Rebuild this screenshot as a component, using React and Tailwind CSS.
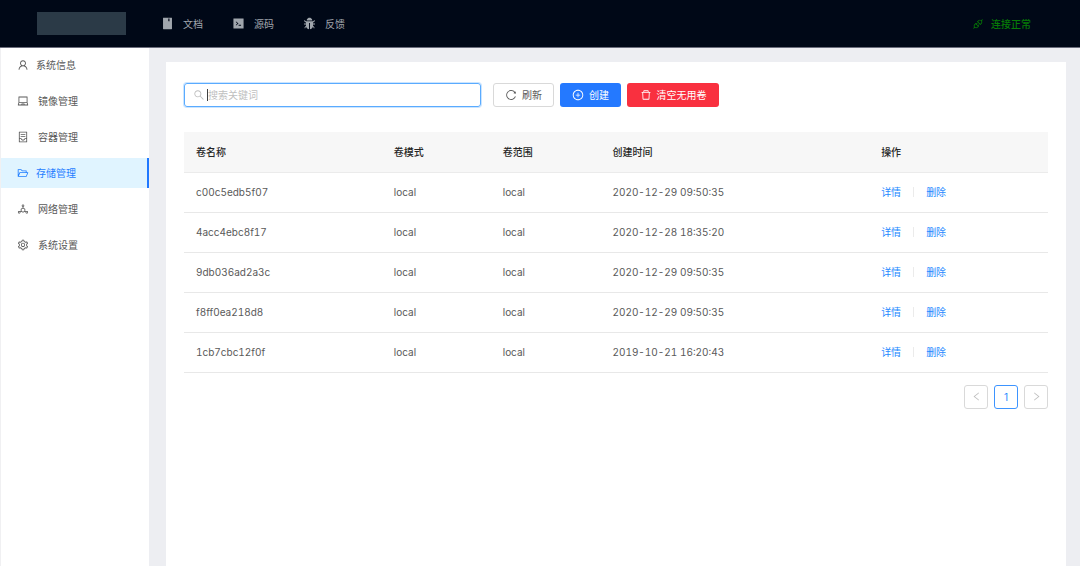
import { useState } from 'react';
import {
  AiFillBook,
  AiFillBug,
  AiFillCode,
  AiOutlineApi,
  AiOutlineContainer,
  AiOutlineDelete,
  AiOutlineDeploymentUnit,
  AiOutlineFolderOpen,
  AiOutlineLaptop,
  AiOutlineLeft,
  AiOutlinePlusCircle,
  AiOutlineReload,
  AiOutlineRight,
  AiOutlineSearch,
  AiOutlineSetting,
  AiOutlineUser,
} from 'react-icons/ai';

const links = [
  { label: '文档', icon: AiFillBook },
  { label: '源码', icon: AiFillCode },
  { label: '反馈', icon: AiFillBug },
];

const menu = [
  { key: 'info', label: '系统信息', icon: AiOutlineUser, tight: true },
  { key: 'image', label: '镜像管理', icon: AiOutlineLaptop },
  { key: 'container', label: '容器管理', icon: AiOutlineContainer },
  { key: 'volume', label: '存储管理', icon: AiOutlineFolderOpen, tight: true },
  { key: 'network', label: '网络管理', icon: AiOutlineDeploymentUnit },
  { key: 'setting', label: '系统设置', icon: AiOutlineSetting },
];

const volumes = [
  { name: 'c00c5edb5f07', driver: 'local', scope: 'local', created: '2020-12-29 09:50:35' },
  { name: '4acc4ebc8f17', driver: 'local', scope: 'local', created: '2020-12-28 18:35:20' },
  { name: '9db036ad2a3c', driver: 'local', scope: 'local', created: '2020-12-29 09:50:35' },
  { name: 'f8ff0ea218d8', driver: 'local', scope: 'local', created: '2020-12-29 09:50:35' },
  { name: '1cb7cbc12f0f', driver: 'local', scope: 'local', created: '2019-10-21 16:20:43' },
];

function Header() {
  return (
    <header className="flex h-12 items-center border-b border-[#6b6d7c] bg-[#000817] pr-[49px] pl-[37px]">
      <div className="h-[23px] w-[89px] bg-[#2b3a47]" />
      <nav className="ml-[35px] flex gap-[29px] text-[#a0a6ad]">
        {links.map(({ label, icon: Icon }) => (
          <a key={label} href="#" className="flex items-center gap-[9px]">
            <Icon className="h-[13px] w-[13px]" />
            {label}
          </a>
        ))}
      </nav>
      <div className="ml-auto flex items-center gap-[7px] font-medium text-[#067a06]">
        <AiOutlineApi className="h-3 w-3" />
        连接正常
      </div>
    </header>
  );
}

function Sidebar({ active, onSelect }) {
  return (
    <aside className="w-[149px] shrink-0 border-l border-[#f0f0f2] bg-white pt-[2px]">
      <nav className="flex flex-col gap-[6px]">
        {menu.map(({ key, label, icon: Icon, tight }) => (
          <a
            key={key}
            href="#"
            onClick={() => onSelect(key)}
            className={`flex h-[30px] items-center pl-4 ${tight ? 'gap-[7px]' : 'gap-[9px]'} ${
              active === key
                ? 'border-r-2 border-[#1f78ff] bg-[#e0f4ff] text-[#1f7dff]'
                : 'text-[#595959]'
            }`}
          >
            <Icon className="h-3 w-3" />
            {label}
          </a>
        ))}
      </nav>
    </aside>
  );
}

function Toolbar({ keyword, onChange }) {
  return (
    <div className="flex items-center">
      <label
        htmlFor="keyword"
        className="flex h-6 w-[297px] items-center rounded-[3px] border border-[#5aabff] px-2 shadow-[0_0_0_1px_#cbe5ff]"
      >
        <AiOutlineSearch className="h-3 w-3 text-[#bfbfbf]" />
        <span className="ml-[2px] h-3 w-px bg-[#404040]" />
        <input
          id="keyword"
          type="text"
          aria-label="搜索关键词"
          placeholder="搜索关键词"
          value={keyword}
          onChange={(e) => onChange(e.target.value)}
          className="h-full min-w-0 flex-1 outline-none placeholder:text-[#bfbfbf]"
        />
      </label>
      <div className="ml-3 flex gap-[6px]">
        <button className="flex h-6 w-[61px] items-center justify-center gap-[5px] rounded-[3px] border border-[#d9d9d9] bg-white text-[#595959]">
          <AiOutlineReload className="h-3 w-3" />
          刷新
        </button>
        <button className="flex h-6 w-[61px] items-center justify-center gap-[5px] rounded-[3px] bg-[#2479ff] text-white">
          <AiOutlinePlusCircle className="h-3 w-3" />
          创建
        </button>
        <button className="flex h-6 w-[92px] items-center justify-center gap-[5px] rounded-[3px] bg-[#f9303f] text-white">
          <AiOutlineDelete className="h-3 w-3" />
          清空无用卷
        </button>
      </div>
    </div>
  );
}

function VolumeTable({ rows }) {
  return (
    <table className="mt-[25px] w-full table-fixed text-left text-[#595959]">
      <colgroup>
        <col className="w-[22.9%]" />
        <col className="w-[12.6%]" />
        <col className="w-[12.7%]" />
        <col className="w-[31.1%]" />
        <col />
      </colgroup>
      <thead className="bg-[#f7f7f7] text-[#262626]">
        <tr className="h-10 border-b border-[#ebebeb]">
          <th className="px-3 font-medium">卷名称</th>
          <th className="px-3 font-medium">卷模式</th>
          <th className="px-3 font-medium">卷范围</th>
          <th className="px-3 font-medium">创建时间</th>
          <th className="px-3 font-medium">操作</th>
        </tr>
      </thead>
      <tbody className="tabular-nums">
        {rows.map((v) => (
          <tr key={v.name} className="h-10 border-b border-[#e8e8e8]">
            <td className="px-3">{v.name}</td>
            <td className="px-3">{v.driver}</td>
            <td className="px-3">{v.scope}</td>
            <td className="px-3">{v.created}</td>
            <td className="px-3">
              <div className="flex items-center text-[#1f8aff]">
                <a href="#">详情</a>
                <span className="mx-3 h-[10px] w-px bg-[#ebebeb]" />
                <a href="#">删除</a>
              </div>
            </td>
          </tr>
        ))}
      </tbody>
    </table>
  );
}

function Pagination() {
  return (
    <div className="mt-3 flex justify-end gap-[6px]">
      <button
        aria-label="上一页"
        className="flex h-6 w-6 items-center justify-center rounded-[3px] border border-[#d9d9d9] text-[#bfbfbf]"
      >
        <AiOutlineLeft className="h-[11px] w-[11px]" />
      </button>
      <button className="h-6 w-6 rounded-[3px] border border-[#3d94ff] text-[#1f8aff]">1</button>
      <button
        aria-label="下一页"
        className="flex h-6 w-6 items-center justify-center rounded-[3px] border border-[#d9d9d9] text-[#bfbfbf]"
      >
        <AiOutlineRight className="h-[11px] w-[11px]" />
      </button>
    </div>
  );
}

export default function App() {
  const [active, setActive] = useState('volume');
  const [keyword, setKeyword] = useState('');
  const rows = volumes.filter((v) => v.name.includes(keyword));

  return (
    <div className="flex min-h-screen flex-col bg-[#edeef2] font-['Inter','Noto_Sans_CJK_SC',sans-serif] text-[10px] leading-4">
      <Header />
      <div className="flex flex-1">
        <Sidebar active={active} onSelect={setActive} />
        <main className="mt-[14px] mr-[14px] ml-[17px] min-w-0 flex-1 bg-white px-[18px] pt-[21px]">
          <Toolbar keyword={keyword} onChange={setKeyword} />
          <VolumeTable rows={rows} />
          <Pagination />
        </main>
      </div>
    </div>
  );
}
